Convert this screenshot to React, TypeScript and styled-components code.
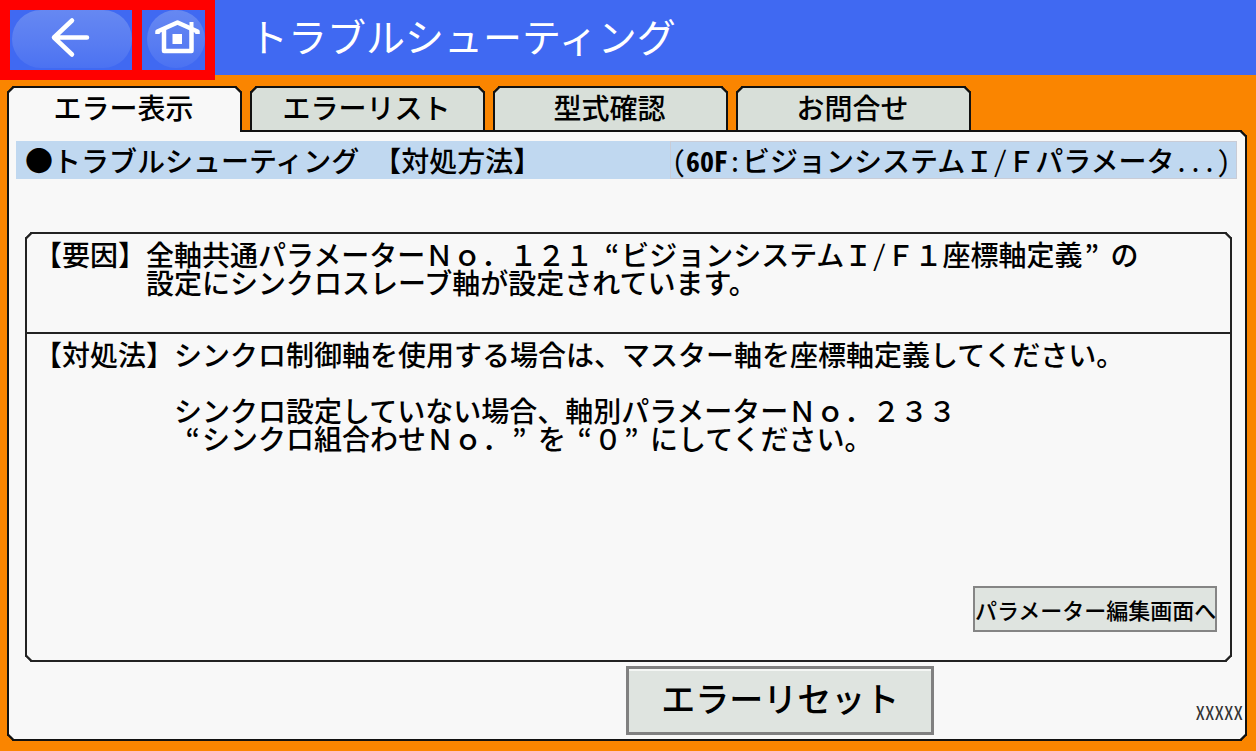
import React from "react";
import styled, { createGlobalStyle } from "styled-components";

const GlobalStyle = createGlobalStyle`
  *, *::before, *::after { box-sizing: border-box; }
  body {
    margin: 0;
    background: #fa8500;
    color: #000;
    font-family: "Noto Sans CJK JP", sans-serif;
  }
  button { font-family: inherit; color: inherit; cursor: pointer; }
`;

const Page = styled.div`
  min-height: 100vh;
  display: flex;
  flex-direction: column;
`;

const Header = styled.header`
  height: 75px;
  display: flex;
  align-items: flex-start;
  background: #4069f2;
`;

const NavFrame = styled.nav`
  position: relative;
  z-index: 1;
  height: 80px;
  display: flex;
  gap: 10px;
  padding: 10px;
  background: #ff0000;
`;

const NavCell = styled.div<{ $width: number }>`
  width: ${(p) => p.$width}px;
  height: 60px;
  display: flex;
  justify-content: flex-end;
  align-items: flex-start;
  background: #4069f2;
`;

const NavButton = styled.button<{ $width: number }>`
  width: ${(p) => p.$width}px;
  height: 58px;
  padding: 0;
  border: 0;
  border-radius: 29px;
  background: linear-gradient(#6688f2, #587cf2 60%, #4b72f2);
  svg { display: block; margin: 0 auto; }
`;

const Title = styled.h1`
  margin: 0;
  padding-left: 34px;
  font-size: 39px;
  line-height: 70px;
  font-weight: 400;
  color: #fff;
  white-space: nowrap;
`;

const TabList = styled.div`
  position: relative;
  z-index: 1;
  display: flex;
  gap: 8px;
  margin: 11px 10px -2px 7px;
`;

const Tab = styled.button<{ $active?: boolean }>`
  flex: 0 1 235px;
  height: 46px;
  padding: ${(p) => (p.$active ? "0 2px 6px 0" : "0 2px 4px 0")};
  border: 2px solid #111;
  border-bottom-width: ${(p) => (p.$active ? "0" : "2px")};
  border-radius: 6px 6px 0 0;
  corner-shape: bevel;
  background: ${(p) => (p.$active ? "#f8f8f8" : "#d8dfd9")};
  font-size: 28px;
  line-height: 38px;
  font-weight: 500;
  white-space: nowrap;
`;

const Panel = styled.main`
  flex: 1;
  display: flex;
  flex-direction: column;
  margin: 0 9px 10px 7px;
  padding: 9px 2px 4px 7px;
  border: 2px solid #111;
  border-radius: 0 6px 6px 6px;
  corner-shape: bevel;
  background: #f8f8f8;
`;

const Heading = styled.div`
  display: flex;
  height: 38px;
  margin-right: 6px;
  background: #c0d8f0;
  font-size: 28px;
  line-height: 38px;
  font-weight: 500;
  white-space: nowrap;
`;

const HeadingTitle = styled.h2`
  flex: 1;
  margin: 0;
  padding-left: 9px;
  font: inherit;
`;

const HeadingCode = styled.div`
  flex: 0 0 567px;
  padding-left: 1px;
  border: 1px solid #c9ccd6;
  line-height: 36px;
`;

const Half = styled.span<{ $bold?: boolean }>`
  font-family: "Noto Sans Mono CJK JP", "Liberation Mono", monospace;
  font-weight: ${(p) => (p.$bold ? 700 : 400)};
`;

/* A quotation mark that fills one full-width cell. */
const Quote = styled.span<{ $side: "open" | "close" }>`
  display: inline-block;
  width: 28px;
  padding: 0 2px;
  text-align: ${(p) => (p.$side === "open" ? "right" : "left")};
`;

const Card = styled.div`
  flex: 1;
  display: flex;
  flex-direction: column;
  margin: 53px 11px 0 9px;
  border: 2px solid #222;
  border-radius: 6px;
  corner-shape: bevel;
`;

const Section = styled.section<{ $grow?: boolean }>`
  display: flex;
  flex-direction: column;
  flex: ${(p) => (p.$grow ? "1" : "0 0 100px")};
  padding: 6px 13px 0 7px;
  border-bottom: ${(p) => (p.$grow ? "0" : "2px solid #222")};
`;

const Entry = styled.div`
  display: flex;
  font-size: 28px;
  line-height: 28px;
  font-weight: 500;
  white-space: pre;
`;

const Label = styled.h3`
  margin: 0;
  font: inherit;
`;

const Text = styled.p`
  margin: 0;
`;

const EditButton = styled.button`
  align-self: flex-end;
  margin: auto 0 28px;
  width: 244px;
  height: 46px;
  padding: 0;
  border: 2px solid #858585;
  background: #dfe4e0;
  font-size: 22px;
  line-height: 38px;
  font-weight: 500;
  white-space: nowrap;
`;

const Footer = styled.footer`
  display: grid;
  grid-template-columns: 2fr 308px 1fr;
  align-items: center;
  margin-left: -7px;
  padding-top: 4px;
`;

const ResetButton = styled.button`
  grid-column: 2;
  height: 69px;
  padding: 0 0 6px;
  border: 3px solid #808080;
  background: #dfe4e0;
  box-shadow: inset 0 2px #f4f6f4;
  font-size: 34px;
  line-height: 54px;
  font-weight: 500;
  white-space: nowrap;
`;

const Version = styled.span`
  justify-self: end;
  padding-top: 22px;
  font-family: "Noto Sans Mono CJK JP", "Liberation Mono", monospace;
  font-size: 19px;
  line-height: 24px;
  color: #333;
`;

const BackIcon = () => (
  <svg width="120" height="58" viewBox="12 10 120 58" fill="none" stroke="#fff" strokeWidth="4.500" strokeLinecap="round" strokeLinejoin="round" aria-hidden="true">
    <path d="M72 20.500 54 37.500 72 54.500M54 37.500H87" />
  </svg>
);

const HomeIcon = () => (
  <svg width="58" height="58" viewBox="147 10 58 58" fill="none" stroke="#fff" strokeWidth="4.500" strokeLinejoin="round" aria-hidden="true">
    <path d="M157.500 34V31.500L177.500 22.500 197.500 31.500V34" />
    <path d="M164 30V51H191.500V30" />
    <path d="M191.500 22V30" strokeWidth="4" />
    <rect x="172.500" y="34" width="9.500" height="10" fill="#fff" stroke="none" />
  </svg>
);

export default function App() {
  return (
    <Page lang="ja">
      <GlobalStyle />
      <Header>
        <NavFrame>
          <NavCell $width={122}>
            <NavButton $width={120} aria-label="戻る"><BackIcon /></NavButton>
          </NavCell>
          <NavCell $width={63}>
            <NavButton $width={58} aria-label="ホーム"><HomeIcon /></NavButton>
          </NavCell>
        </NavFrame>
        <Title>トラブルシューティング</Title>
      </Header>
      <TabList role="tablist">
        <Tab role="tab" aria-selected="true" $active>エラー表示</Tab>
        <Tab role="tab" aria-selected="false">エラーリスト</Tab>
        <Tab role="tab" aria-selected="false">型式確認</Tab>
        <Tab role="tab" aria-selected="false">お問合せ</Tab>
      </TabList>
      <Panel>
        <Heading>
          <HeadingTitle>●トラブルシューティング<Half>&nbsp;</Half>【対処方法】</HeadingTitle>
          <HeadingCode>
            <Half>(</Half><Half $bold>60F</Half><Half>:</Half>ビジョンシステムＩ<Half>/</Half>Ｆパラメータ<Half>...)</Half>
          </HeadingCode>
        </Heading>
        <Card>
          <Section>
            <Entry>
              <Label>【要因】</Label>
              <Text>
                全軸共通パラメーターＮｏ．１２１<Quote $side="open">“</Quote>ビジョンシステムＩ<Half>/</Half>Ｆ１座標軸定義<Quote $side="close">”</Quote>の<br />
                設定にシンクロスレーブ軸が設定されています。
              </Text>
            </Entry>
          </Section>
          <Section $grow>
            <Entry>
              <Label>【対処法】</Label>
              <Text>
                シンクロ制御軸を使用する場合は、マスター軸を座標軸定義してください。<br />
                <br />
                シンクロ設定していない場合、軸別パラメーターＮｏ．２３３<br />
                <Quote $side="open">“</Quote>シンクロ組合わせＮｏ．<Quote $side="close">”</Quote>を<Quote $side="open">“</Quote>０<Quote $side="close">”</Quote>にしてください。
              </Text>
            </Entry>
            <EditButton>パラメーター編集画面へ</EditButton>
          </Section>
        </Card>
        <Footer>
          <ResetButton>エラーリセット</ResetButton>
          <Version>XXXXX</Version>
        </Footer>
      </Panel>
    </Page>
  );
}
